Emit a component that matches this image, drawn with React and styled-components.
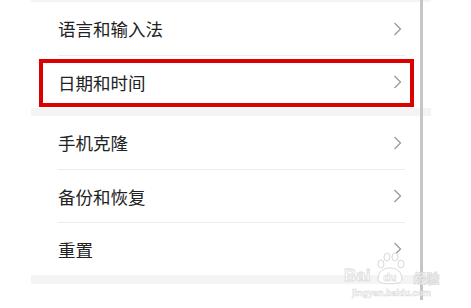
import React from "react";
import styled, { createGlobalStyle } from "styled-components";

const Global = createGlobalStyle`
    html, body {
        margin: 0;
        padding: 0;
        background: #ffffff;
    }
    body {
        font-family: "Noto Sans CJK SC", "Noto Sans", sans-serif;
    }
`;

const Page = styled.div`
    position: relative;
    width: 471px;
    height: 308px;
    overflow: hidden;
    background: #ffffff;
`;

const Panel = styled.div`
    margin-left: 31px;
    width: 400px;
    padding-top: 2px;
    background: #f4f4f4;
    display: flex;
    flex-direction: column;
    gap: 8px;
    padding-bottom: 9px;
`;

const Group = styled.div`
    background: #ffffff;
    display: flex;
    flex-direction: column;
`;

const Row = styled.div`
    position: relative;
    height: 53px;
    display: flex;
    align-items: center;
    justify-content: space-between;
    padding: 0 29px 0 27px;
    box-sizing: border-box;
    border-top: ${p => (p.$divider ? "1px solid #ececec" : "none")};
    margin-left: ${p => (p.$divider ? "27px" : "0")};
    margin-right: ${p => (p.$divider ? "26px" : "0")};
    padding-left: ${p => (p.$divider ? "0" : "27px")};
    padding-right: ${p => (p.$divider ? "3px" : "29px")};
`;

const Label = styled.span`
    font-size: 17.5px;
    color: #222222;
    letter-spacing: 0;
    margin-top: ${p => p.$shift || 0}px;
`;

const Highlight = styled.div`
    position: absolute;
    left: ${p => (p.$divider ? "-19px" : "8px")};
    right: ${p => (p.$divider ? "-9px" : "17px")};
    top: 3px;
    bottom: 1px;
    border: 4px solid #dc0000;
    pointer-events: none;
`;

const Scrollbar = styled.div`
    position: absolute;
    left: 420px;
    top: 0;
    width: 3px;
    height: 300px;
    background: #c6c6c6;
`;

const Watermark = styled.div`
    position: absolute;
    left: 344px;
    top: 250px;
    width: 100px;
    height: 50px;
    pointer-events: none;
`;

const MarkTop = styled.div`
    display: flex;
    align-items: flex-end;
    height: 34px;
    gap: 2px;
`;

const MarkWord = styled.span`
    font-family: "Liberation Sans", Arial, sans-serif;
    font-weight: 700;
    font-size: ${p => p.$size || 15}px;
    line-height: 1;
    color: #ffffff;
    -webkit-text-stroke: 0.8px #d8d8d8;
    opacity: 0.9;
`;

const MarkCjk = styled(MarkWord)`
    font-family: "Noto Sans CJK SC", sans-serif;
    margin-left: 3px;
`;

const MarkUrl = styled.div`
    font-family: "Liberation Sans", Arial, sans-serif;
    font-weight: 700;
    font-size: 9px;
    color: #ffffff;
    -webkit-text-stroke: 0.5px #d8d8d8;
    margin-top: 4px;
    margin-left: 8px;
`;

const Chevron = () => (
    <svg width="9" height="14" viewBox="0 0 9 14">
        <polyline points="1.5,1 7.5,7 1.5,13" fill="none" stroke="#9a9a9a" strokeWidth="1.3" />
    </svg>
);

const Paw = () => (
    <svg width="36" height="34" viewBox="0 0 36 34" style={{ marginBottom: -2 }}>
        <g fill="#ffffff" stroke="#d8d8d8" strokeWidth="1">
            <ellipse cx="9" cy="12" rx="3" ry="4" />
            <ellipse cx="15" cy="5" rx="3" ry="4" />
            <ellipse cx="23" cy="5" rx="3" ry="4" />
            <ellipse cx="29" cy="12" rx="3" ry="4" />
            <path d="M6 28 C6 19 12 16 18 16 C24 16 30 19 30 28 C30 33 6 33 6 28 Z" />
        </g>
        <text x="18" y="29" textAnchor="middle" fontFamily="Liberation Sans, Arial, sans-serif"
            fontWeight="700" fontSize="11" fill="#ffffff" stroke="#d8d8d8" strokeWidth="0.6">du</text>
    </svg>
);

const groups = [
    [{ label: "语言和输入法" }, { label: "日期和时间", marked: true }],
    [{ label: "手机克隆" }, { label: "备份和恢复" }, { label: "重置" }],
];

const App = () => (
    <Page>
        <Global />
        <Panel>
            {groups.map((items, gi) => (
                <Group key={gi}>
                    {items.map((item, i) => (
                        <Row key={item.label} $divider={i > 0}>
                            {item.marked && <Highlight $divider={i > 0} />}
                            <Label>{item.label}</Label>
                            <Chevron />
                        </Row>
                    ))}
                </Group>
            ))}
        </Panel>
        <Scrollbar />
        <Watermark>
            <MarkTop>
                <MarkWord $size={17}>Bai</MarkWord>
                <Paw />
                <MarkCjk $size={13}>经验</MarkCjk>
            </MarkTop>
            <MarkUrl>jingyan.baidu.com</MarkUrl>
        </Watermark>
    </Page>
);

export default App;
